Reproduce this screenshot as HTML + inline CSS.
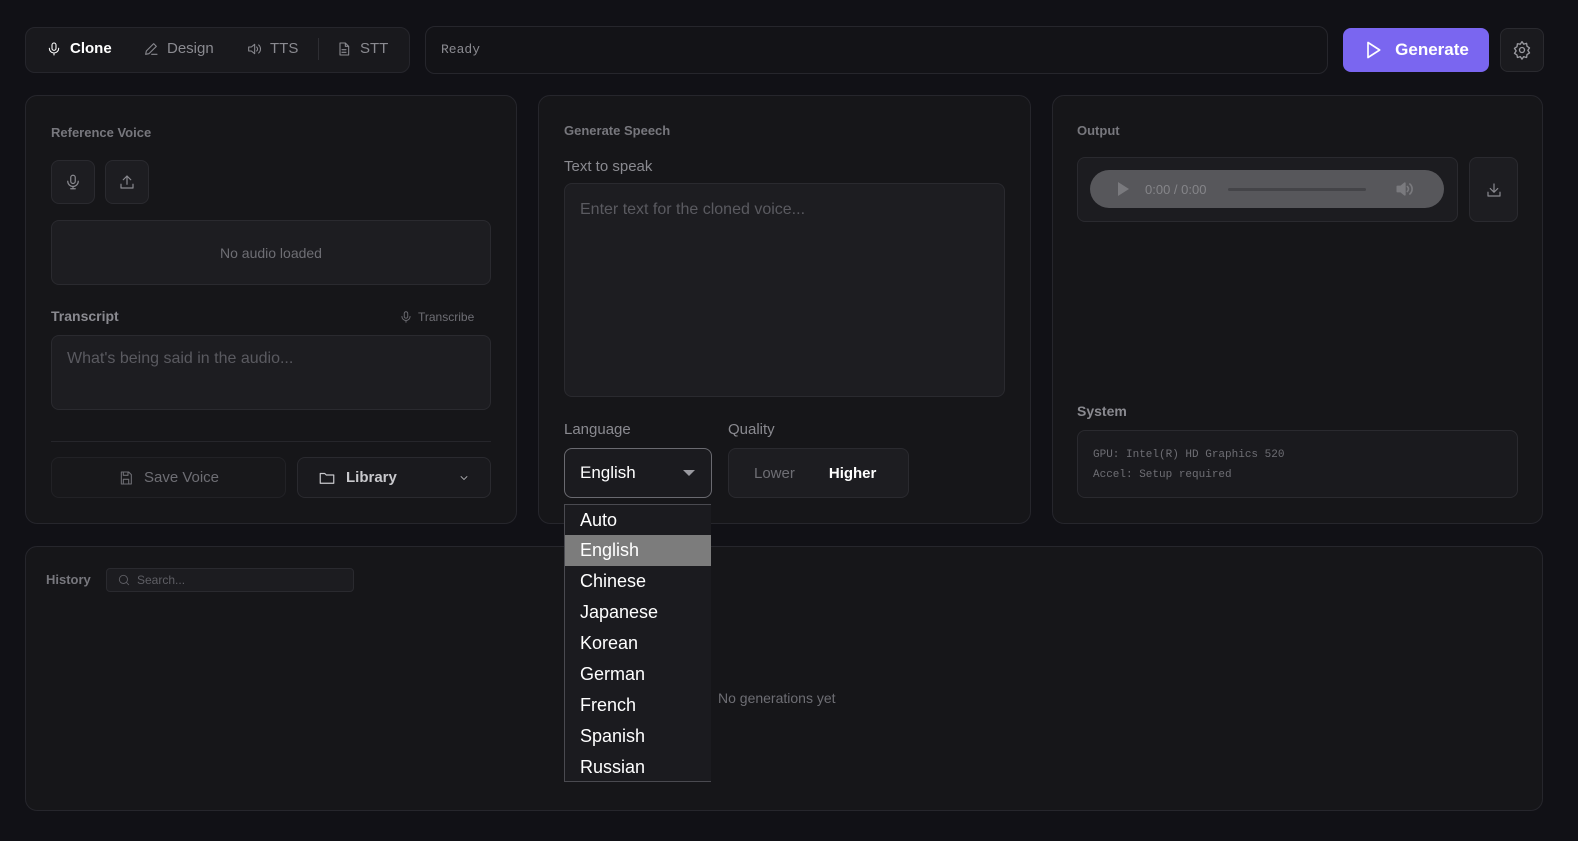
<!DOCTYPE html>
<html><head><meta charset="utf-8"><style>
*{box-sizing:border-box;margin:0;padding:0}
body{width:1578px;height:841px;background:#111116;font-family:"Liberation Sans",sans-serif;color:#8a8a90;position:relative;overflow:hidden}
.a{position:absolute}
.panel{position:absolute;background:#161619;border:1px solid #26262c;border-radius:12px}
.box{position:absolute;background:#1d1d21;border:1px solid #2a2a2f;border-radius:8px}
.lbl{position:absolute;font-size:13px;font-weight:bold;color:#77777d}
.lbl2{position:absolute;font-size:15px;color:#8a8a90}
svg{stroke:currentColor;fill:none;stroke-width:1.6;stroke-linecap:round;stroke-linejoin:round}
.dd div{height:31px;line-height:31px;padding-left:15px;font-size:18px;color:#fff}
</style></head><body>

<div class="panel" style="left:25px;top:27px;width:385px;height:46px;border-radius:10px;background:#19191d"></div>
<div class="a" style="left:46px;top:40px;color:#fff;font-size:15px;font-weight:bold;display:flex;align-items:center;gap:8px">
<svg width="16" height="16" viewBox="0 0 24 24"><rect x="9" y="3" width="6" height="11" rx="3"/><path d="M5 11a7 7 0 0 0 14 0M12 18v3"/></svg>Clone</div>
<div class="a" style="left:143px;top:40px;color:#8a8a90;font-size:15px;display:flex;align-items:center;gap:8px">
<svg width="16" height="16" viewBox="0 0 24 24"><path d="M4 20l1-5L16 4l4 4L9 19zM13 20h8"/></svg>Design</div>
<div class="a" style="left:246px;top:40px;color:#8a8a90;font-size:15px;display:flex;align-items:center;gap:8px">
<svg width="16" height="16" viewBox="0 0 24 24"><path d="M4 9h4l5-4v14l-5-4H4zM16 9a4 4 0 0 1 0 6M19 6a8 8 0 0 1 0 12"/></svg>TTS</div>
<div class="a" style="left:318px;top:38px;width:1px;height:22px;background:#2e2e33"></div>
<div class="a" style="left:336px;top:40px;color:#8a8a90;font-size:15px;display:flex;align-items:center;gap:8px">
<svg width="16" height="16" viewBox="0 0 24 24"><path d="M6 3h8l5 5v13H6zM14 3v5h5M9 13h6M9 17h6"/></svg>STT</div>

<div class="panel" style="left:425px;top:26px;width:903px;height:48px;border-radius:10px;background:#131317"></div>
<div class="a" style="left:441px;top:42px;font-family:'Liberation Mono',monospace;font-size:13px;color:#8a8a90">Ready</div>

<div class="a" style="left:1343px;top:28px;width:146px;height:44px;background:#7a66f0;border-radius:8px;color:#fff;font-size:17px;font-weight:bold;display:flex;align-items:center;justify-content:center;gap:12px">
<svg width="20" height="20" viewBox="0 0 24 24" style="stroke-width:2"><path d="M6 3l14 9-14 9z"/></svg>Generate</div>
<div class="a" style="left:1500px;top:28px;width:44px;height:44px;background:#1a1a1e;border:1px solid #2a2a2f;border-radius:8px;color:#9a9aa0;display:flex;align-items:center;justify-content:center">
<svg width="20" height="20" viewBox="0 0 24 24"><circle cx="12" cy="12" r="3"/><path d="M12 2l2 3 3.5-1 .5 3.5 3 2-2 3 2 3-3 2-.5 3.5-3.5-1-2 3-2-3-3.5 1L6 18l-3-2 2-3-2-3 3-2 .5-3.5L10 5z"/></svg></div>

<!-- panel 1 -->
<div class="panel" style="left:25px;top:95px;width:492px;height:429px"></div>
<div class="lbl" style="left:51px;top:125px">Reference Voice</div>
<div class="box" style="left:51px;top:160px;width:44px;height:44px;color:#8a8a90;display:flex;align-items:center;justify-content:center"><svg width="18" height="18" viewBox="0 0 24 24"><rect x="9" y="3" width="6" height="11" rx="3"/><path d="M5 11a7 7 0 0 0 14 0M12 18v3M9 21h6"/></svg></div>
<div class="box" style="left:105px;top:160px;width:44px;height:44px;color:#8a8a90;display:flex;align-items:center;justify-content:center"><svg width="18" height="18" viewBox="0 0 24 24"><path d="M12 15V4M7 9l5-5 5 5M4 15v5h16v-5"/></svg></div>
<div class="box" style="left:51px;top:220px;width:440px;height:65px;display:flex;align-items:center;justify-content:center;font-size:14px;color:#6e6e74">No audio loaded</div>
<div class="lbl2" style="left:51px;top:308px;font-weight:bold;font-size:14px">Transcript</div>
<div class="a" style="left:399px;top:310px;font-size:12px;color:#6e6e74;display:flex;align-items:center;gap:5px"><svg width="14" height="14" viewBox="0 0 24 24"><rect x="9" y="3" width="6" height="11" rx="3"/><path d="M5 11a7 7 0 0 0 14 0M12 18v3"/></svg>Transcribe</div>
<div class="box" style="left:51px;top:335px;width:440px;height:75px;padding:14px 15px;font-size:16px;color:#5a5a60">What's being said in the audio...</div>
<div class="a" style="left:51px;top:441px;width:440px;height:1px;background:#26262b"></div>
<div class="a" style="left:51px;top:457px;width:235px;height:41px;border:1px solid #222226;border-radius:8px;background:#18181b;display:flex;align-items:center;justify-content:center;gap:10px;font-size:15px;color:#6e6e74"><svg width="16" height="16" viewBox="0 0 24 24"><path d="M5 3h11l4 4v14H5zM8 3v5h7V3M8 21v-7h8v7"/></svg>Save Voice</div>
<div class="a" style="left:297px;top:457px;width:194px;height:41px;border:1px solid #2a2a2f;border-radius:8px;background:#1a1a1e;padding-left:20px;display:flex;align-items:center;gap:10px;font-size:15px;color:#c8c8cc;font-weight:bold"><svg width="18" height="18" viewBox="0 0 24 24"><path d="M3 6h6l2 2h10v11H3z"/></svg>Library<svg width="12" height="12" viewBox="0 0 24 24" style="margin-left:auto;margin-right:20px"><path d="M6 9l6 6 6-6"/></svg></div>

<!-- panel 2 -->
<div class="panel" style="left:538px;top:95px;width:493px;height:429px"></div>
<div class="lbl" style="left:564px;top:123px">Generate Speech</div>
<div class="lbl2" style="left:564px;top:158px">Text to speak</div>
<div class="box" style="left:564px;top:183px;width:441px;height:214px;padding:17px 15px;font-size:16px;color:#5a5a60">Enter text for the cloned voice...</div>
<div class="lbl2" style="left:564px;top:421px">Language</div>
<div class="lbl2" style="left:728px;top:421px">Quality</div>
<div class="a" style="left:564px;top:448px;width:148px;height:50px;border:1.5px solid #6a6a70;border-radius:8px;background:#1b1b1f;padding-left:15px;display:flex;align-items:center;font-size:17px;color:#fff">English<span style="margin-left:auto;margin-right:16px;width:0;height:0;border-left:6px solid transparent;border-right:6px solid transparent;border-top:6px solid #9a9aa0"></span></div>
<div class="box" style="left:728px;top:448px;width:181px;height:50px;display:flex;align-items:center;font-size:15px"><span style="margin-left:25px;color:#6e6e74">Lower</span><span style="margin-left:34px;color:#fff;font-weight:bold">Higher</span></div>

<!-- panel 3 -->
<div class="panel" style="left:1052px;top:95px;width:491px;height:429px"></div>
<div class="lbl" style="left:1077px;top:123px">Output</div>
<div class="box" style="left:1077px;top:157px;width:381px;height:65px;background:#1c1c20"></div>
<div class="a" style="left:1090px;top:170px;width:354px;height:38px;border-radius:19px;background:#57575b;display:flex;align-items:center;color:#8c8c90;font-size:13px">
<span style="margin-left:28px;width:0;height:0;border-top:7px solid transparent;border-bottom:7px solid transparent;border-left:11px solid #7a7a7e"></span>
<span style="margin-left:16px;color:#858589">0:00 / 0:00</span>
<span style="margin-left:22px;width:138px;height:3px;background:#444448;border-radius:2px"></span>
<svg width="20" height="20" viewBox="0 0 24 24" style="margin-left:28px;stroke:#7a7a7e;stroke-width:2"><path d="M4 9h4l5-4v14l-5-4H4z" fill="#7a7a7e"/><path d="M16 9a4 4 0 0 1 0 6M19 6a8 8 0 0 1 0 12"/></svg></div>
<div class="box" style="left:1469px;top:157px;width:49px;height:65px;color:#8a8a90;display:flex;align-items:center;justify-content:center"><svg width="18" height="18" viewBox="0 0 24 24"><path d="M12 4v11M7 10l5 5 5-5M4 15v5h16v-5"/></svg></div>
<div class="lbl2" style="left:1077px;top:403px;font-weight:bold;font-size:14px">System</div>
<div class="box" style="left:1077px;top:430px;width:441px;height:68px;background:#1a1a1e;padding:14px 15px;font-family:'Liberation Mono',monospace;font-size:11px;line-height:20px;color:#6e6e74">GPU: Intel(R) HD Graphics 520<br>Accel: Setup required</div>

<!-- history -->
<div class="panel" style="left:25px;top:546px;width:1518px;height:265px"></div>
<div class="lbl" style="left:46px;top:572px">History</div>
<div class="a" style="left:106px;top:568px;width:248px;height:24px;border:1px solid #2a2a2f;border-radius:4px;background:#1c1c20;display:flex;align-items:center;gap:6px;padding-left:10px;font-size:12px;color:#5e5e64"><svg width="14" height="14" viewBox="0 0 24 24"><circle cx="11" cy="11" r="7"/><path d="M20 20l-4-4"/></svg>Search...</div>
<div class="a" style="left:718px;top:690px;font-size:14px;color:#6e6e74">No generations yet</div>

<!-- dropdown -->
<div class="a dd" style="left:564px;top:504px;width:147px;height:278px;background:#1b1b1f;border:1px solid #4a4a50;border-right:none">
<div style="height:30px">Auto</div>
<div style="background:#7c7c7c">English</div>
<div>Chinese</div><div>Japanese</div><div>Korean</div><div>German</div><div>French</div><div>Spanish</div><div>Russian</div>
</div>
</body></html>
